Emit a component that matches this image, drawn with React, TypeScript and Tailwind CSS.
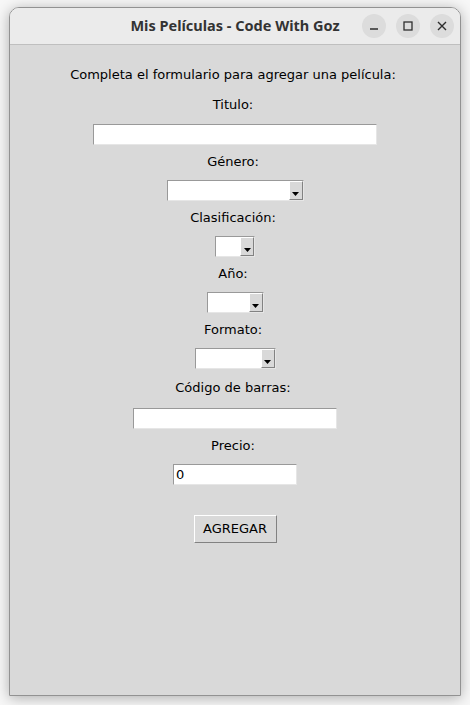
const bodyFont = { fontFamily: '"DejaVu Sans", sans-serif' }

function Label({ text, className = '' }: { text: string; className?: string }) {
  return <p className={`mr-[4px] text-[13px] leading-4 text-black ${className}`}>{text}</p>
}

function Entry({ width, value = '', className = '' }: { width: string; value?: string; className?: string }) {
  return (
    <div
      className={`h-[21px] ${width} flex items-center bg-white border border-t-[#999999] border-l-[#999999] border-r-[#e6e6e6] border-b-[#e6e6e6] pl-[2px] text-[13px] leading-4 text-black ${className}`}
    >
      {value}
    </div>
  )
}

function Combo({ width, className = '' }: { width: string; className?: string }) {
  return (
    <div
      className={`h-[21px] ${width} flex bg-white border border-t-[#999999] border-l-[#999999] border-r-[#e6e6e6] border-b-[#e6e6e6] ${className}`}
    >
      <div className="flex-1" />
      <div className="w-[14px] h-full flex items-end justify-center pb-[3px] bg-[#d9d9d9] border border-t-white border-l-white border-r-[#828282] border-b-[#828282]">
        <svg width="7" height="4" viewBox="0 0 7 4">
          <polygon points="0,0 7,0 3.5,4" fill="#000" />
        </svg>
      </div>
    </div>
  )
}

function TitleButton({ children }: { children: React.ReactNode }) {
  return (
    <div className="w-[24px] h-[24px] rounded-full bg-[#dcdcdc] flex items-center justify-center">
      {children}
    </div>
  )
}

export default function App() {
  return (
    <div className="w-[470px] h-[705px] bg-[#f7f7f7] pt-[7px] pl-[9px]">
      <div className="w-[452px] h-[689px] flex flex-col border border-[#929292] rounded-t-[10px] overflow-hidden shadow-[0_2px_14px_rgba(0,0,0,0.3)]">
        <div className="h-[37px] shrink-0 grid grid-cols-[1fr_auto_1fr] items-center bg-[#ebebeb] border-b border-[#bfbfbf]">
          <div />
          <p
            className="text-[14.5px] font-bold text-[#333333] whitespace-nowrap"
            style={{ fontFamily: '"Noto Sans", sans-serif' }}
          >
            Mis Películas - Code With Goz
          </p>
          <div className="flex justify-end gap-[10px] pr-[6px]">
            <TitleButton>
              <svg width="12" height="12" viewBox="0 0 12 12">
                <line x1="2" y1="9" x2="10" y2="9" stroke="#2e2e2e" strokeWidth="1.4" />
              </svg>
            </TitleButton>
            <TitleButton>
              <svg width="12" height="12" viewBox="0 0 12 12">
                <rect x="2" y="2" width="8" height="8" fill="none" stroke="#2e2e2e" strokeWidth="1.3" />
              </svg>
            </TitleButton>
            <TitleButton>
              <svg width="12" height="12" viewBox="0 0 12 12">
                <path d="M2 2 L10 10 M10 2 L2 10" stroke="#2e2e2e" strokeWidth="1.4" />
              </svg>
            </TitleButton>
          </div>
        </div>

        <div className="flex-1 bg-[#d9d9d9] flex flex-col items-center" style={bodyFont}>
          <Label text="Completa el formulario para agregar una película:" className="mt-[22px]" />
          <Label text="Titulo:" className="mt-[14px]" />
          <Entry width="w-[284px]" className="mt-[11px]" />
          <Label text="Género:" className="mt-[9px]" />
          <Combo width="w-[137px]" className="mt-[10px]" />
          <Label text="Clasificación:" className="mt-[9px]" />
          <Combo width="w-[40px]" className="mt-[10px]" />
          <Label text="Año:" className="mt-[9px]" />
          <Combo width="w-[57px]" className="mt-[10px]" />
          <Label text="Formato:" className="mt-[9px]" />
          <Combo width="w-[81px]" className="mt-[10px]" />
          <Label text="Código de barras:" className="mt-[11px]" />
          <Entry width="w-[204px]" className="mt-[12px]" />
          <Label text="Precio:" className="mt-[9px]" />
          <Entry width="w-[124px]" value="0" className="mt-[10px]" />
          <button
            type="button"
            className="mt-[30px] h-[28px] w-[83px] bg-[#d9d9d9] text-[13px] leading-4 text-black border border-t-white border-l-white border-r-[#828282] border-b-[#828282]"
          >
            AGREGAR
          </button>
        </div>
      </div>
    </div>
  )
}
